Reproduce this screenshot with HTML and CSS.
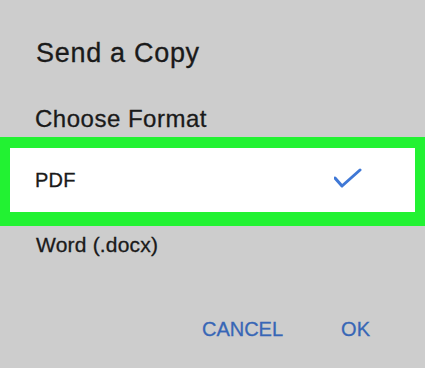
FILE: index.html
```html
<!DOCTYPE html>
<html lang="en">
<head>
    <meta charset="UTF-8">
    <title>Send a Copy</title>
    <link rel="stylesheet" href="styles.css">
</head>
<body>

<div class="dialog">
    <div class="dialog-title">Send a Copy</div>
    <div class="dialog-subtitle">Choose Format</div>

    <div class="format-highlight">
        <div class="format-option selected">
            <span>PDF</span>
            <svg class="check-icon" width="28" height="20" viewBox="0 0 28 20">
                <path d="M1 10 L8 18 L26 2" fill="none" stroke="#3f78d6" stroke-width="3" stroke-linecap="round" stroke-linejoin="round"/>
            </svg>
        </div>
    </div>

    <div class="format-option">Word (.docx)</div>

    <div class="dialog-buttons">
        <a href="#" class="dialog-button">CANCEL</a>
        <a href="#" class="dialog-button">OK</a>
    </div>
</div>

</body>
</html>
```

FILE: styles.css
```css
body {
    margin: 0;
    background: #cdcdcd;
    font-family: 'Liberation Sans', Arial, sans-serif;
    color: #1a1a1a;
    -webkit-text-stroke: 0.3px currentColor;
}
.dialog {
    width: 425px;
    height: 368px;
    overflow: hidden;
}
.dialog-title {
    padding: 33px 0 0 36px;
    font-size: 27px;
    line-height: 40px;
    letter-spacing: 0.7px;
}
.dialog-subtitle {
    margin-top: 28px;
    padding-left: 35px;
    font-size: 24px;
    line-height: 36px;
    letter-spacing: 0.5px;
}
.format-highlight {
    border-style: solid;
    border-color: #22f232;
    border-width: 11px 10px 14px 10px;
    background: #ffffff;
}
.format-highlight .format-option {
    display: flex;
    justify-content: space-between;
    align-items: center;
    height: 64px;
    padding: 0 53px 0 25px;
    font-size: 20px;
    line-height: 64px;
}
.check-icon {
    display: block;
    margin-bottom: 4px;
}
.format-option {
    padding-left: 36px;
    font-size: 21px;
    line-height: 38px;
    letter-spacing: 0.2px;
}
.dialog-buttons {
    display: flex;
    justify-content: flex-end;
    gap: 58px;
    margin-top: 45px;
    padding-right: 55px;
}
.dialog-button {
    color: #3766b6;
    text-decoration: none;
    font-size: 20px;
    line-height: 40px;
}
```
